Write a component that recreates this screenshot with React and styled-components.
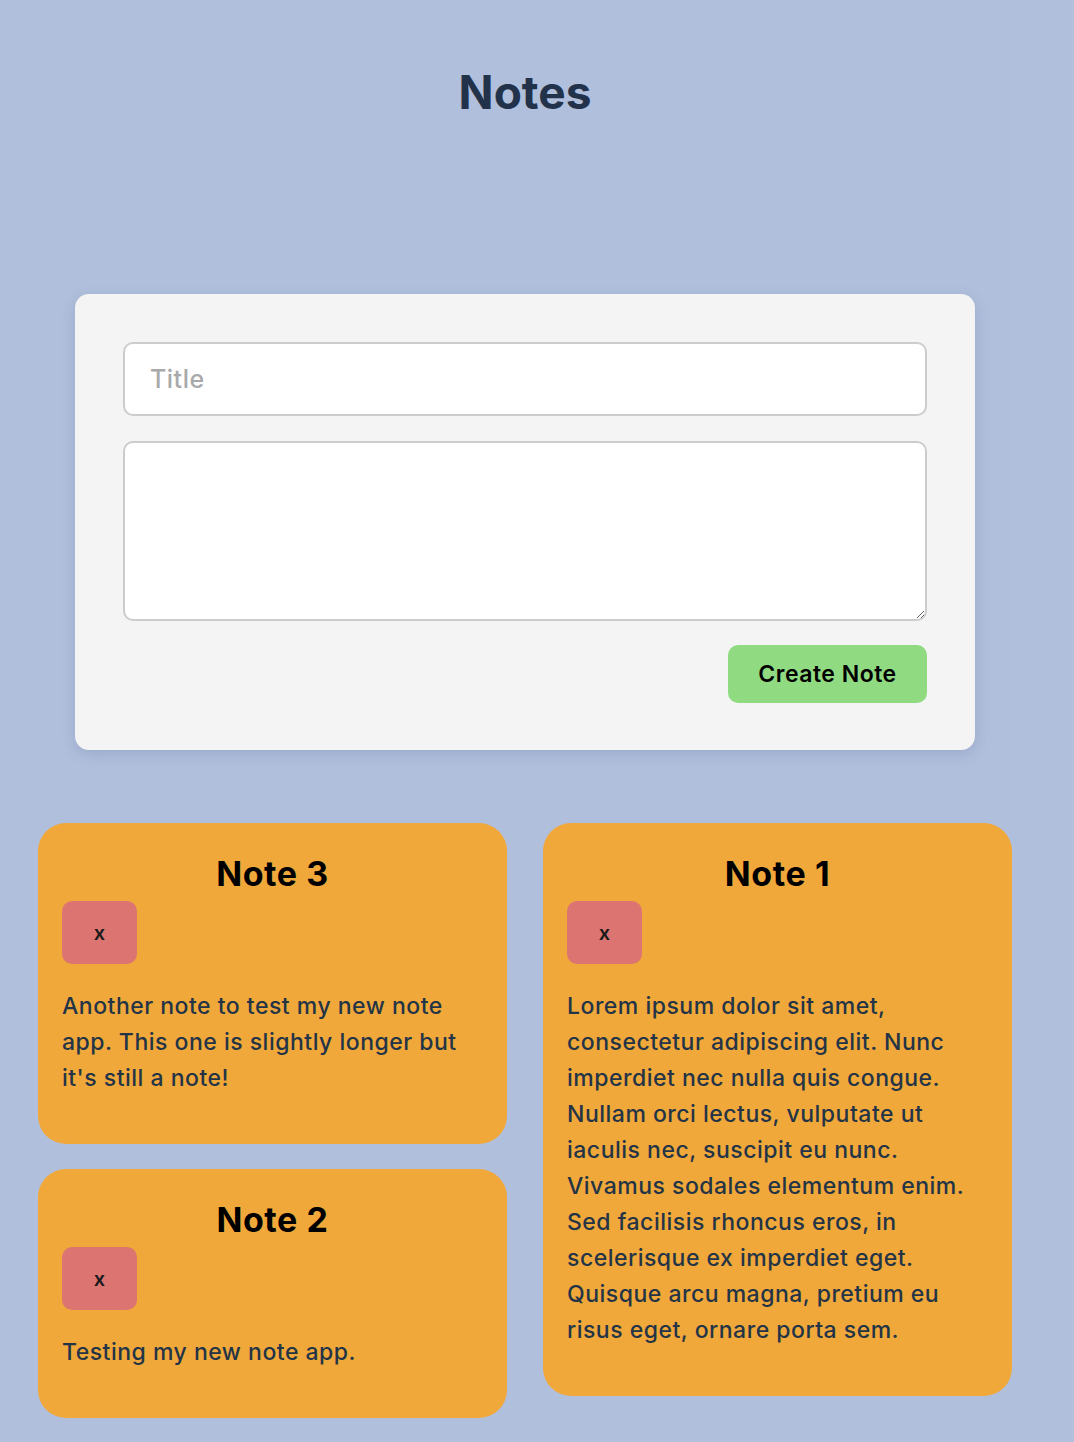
import React, { useState } from "react";
import styled, { createGlobalStyle } from "styled-components";

const GlobalStyle = createGlobalStyle`
  body {
    margin: 0;
    background-color: #b0bfdc;
    font-family: Inter, "Noto Sans", sans-serif;
  }
`;

const initialNotes = [
  {
    id: 3,
    title: "Note 3",
    body: "Another note to test my new note app. This one is slightly longer but it's still a note!",
  },
  {
    id: 1,
    title: "Note 1",
    body: "Lorem ipsum dolor sit amet, consectetur adipiscing elit. Nunc imperdiet nec nulla quis congue. Nullam orci lectus, vulputate ut iaculis nec, suscipit eu nunc. Vivamus sodales elementum enim. Sed facilisis rhoncus eros, in scelerisque ex imperdiet eget. Quisque arcu magna, pretium eu risus eget, ornare porta sem.",
  },
  {
    id: 2,
    title: "Note 2",
    body: "Testing my new note app.",
  },
];

export default function App() {
  const [notes, setNotes] = useState(initialNotes);
  const [title, setTitle] = useState("");
  const [body, setBody] = useState("");

  const createNote = (e) => {
    e.preventDefault();
    if (!title.trim()) return;
    setNotes([{ id: Date.now(), title, body }, ...notes]);
    setTitle("");
    setBody("");
  };

  const deleteNote = (id) => setNotes(notes.filter((n) => n.id !== id));

  // masonry: round-robin into two columns
  const columns = [[], []];
  notes.forEach((note, i) => columns[i % 2].push(note));

  return (
    <Page.Main>
      <GlobalStyle />
      <Page.Title>Notes</Page.Title>
      <Form.Card onSubmit={createNote}>
        <Form.Input
          placeholder="Title"
          value={title}
          onChange={(e) => setTitle(e.target.value)}
        />
        <Form.TextArea value={body} onChange={(e) => setBody(e.target.value)} />
        <Form.Actions>
          <Form.Button type="submit">Create Note</Form.Button>
        </Form.Actions>
      </Form.Card>
      <Grid.Container>
        {columns.map((col, i) => (
          <Grid.Column key={i}>
            {col.map((note) => (
              <Note.Card key={note.id}>
                <Note.Title>{note.title}</Note.Title>
                <Note.Delete onClick={() => deleteNote(note.id)}>x</Note.Delete>
                <Note.Body>{note.body}</Note.Body>
              </Note.Card>
            ))}
          </Grid.Column>
        ))}
      </Grid.Container>
    </Page.Main>
  );
}

const Page = {
  Main: styled.main`
    width: 1050px;
    padding-bottom: 26px;
  `,
  Title: styled.h1`
    margin: 0;
    padding-top: 64px;
    font-size: 46px;
    line-height: 56px;
    font-weight: 700;
    color: #22324a;
    text-align: center;
  `,
};

const fieldBase = `
  box-sizing: border-box;
  width: 100%;
  border: 2px solid #cccccc;
  border-radius: 10px;
  background: #ffffff;
  font-family: Inter, "Noto Sans", sans-serif;
  font-size: 25px;
  font-weight: 500;
  letter-spacing: 0.5px;
  color: #22324a;
  outline: none;
  &::placeholder {
    color: #a9a9a9;
  }
`;

const Form = {
  Card: styled.form`
    box-sizing: border-box;
    display: flex;
    flex-direction: column;
    gap: 25px;
    margin: 174px 75px 0;
    padding: 48px 48px 47px;
    background: #f4f4f4;
    border-radius: 14px;
    box-shadow: 0 4px 14px rgba(60, 80, 120, 0.18);
  `,
  Input: styled.input`
    ${fieldBase}
    height: 74px;
    padding: 0 25px;
  `,
  TextArea: styled.textarea`
    ${fieldBase}
    display: block;
    height: 180px;
    padding: 20px 25px;
    resize: vertical;
  `,
  Actions: styled.div`
    display: flex;
    justify-content: flex-end;
    margin-top: -1px;
  `,
  Button: styled.button`
    width: 199px;
    height: 58px;
    border: none;
    border-radius: 10px;
    background: #90db82;
    color: #000000;
    font-family: Inter, "Noto Sans", sans-serif;
    font-size: 23px;
    font-weight: 600;
    letter-spacing: 0.5px;
    cursor: pointer;
  `,
};

const Grid = {
  Container: styled.div`
    display: flex;
    gap: 36px;
    margin-top: 73px;
    padding: 0 38px;
  `,
  Column: styled.div`
    display: flex;
    flex-direction: column;
    gap: 25px;
    width: 469px;
  `,
};

const Note = {
  Card: styled.div`
    box-sizing: border-box;
    padding: 30px 24px 48px;
    background: #f1a83a;
    border-radius: 28px;
  `,
  Title: styled.h2`
    margin: 0 0 7px;
    font-size: 34px;
    line-height: 41px;
    font-weight: 700;
    letter-spacing: 0.6px;
    color: #000000;
    text-align: center;
  `,
  Delete: styled.button`
    display: block;
    width: 75px;
    height: 63px;
    border: none;
    border-radius: 10px;
    background: #dc7571;
    color: #1a1a1a;
    font-family: Inter, "Noto Sans", sans-serif;
    font-size: 20px;
    font-weight: 600;
    cursor: pointer;
  `,
  Body: styled.p`
    margin: 24px 0 0;
    font-size: 23px;
    line-height: 36px;
    font-weight: 500;
    letter-spacing: 0.5px;
    color: #243447;
  `,
};
